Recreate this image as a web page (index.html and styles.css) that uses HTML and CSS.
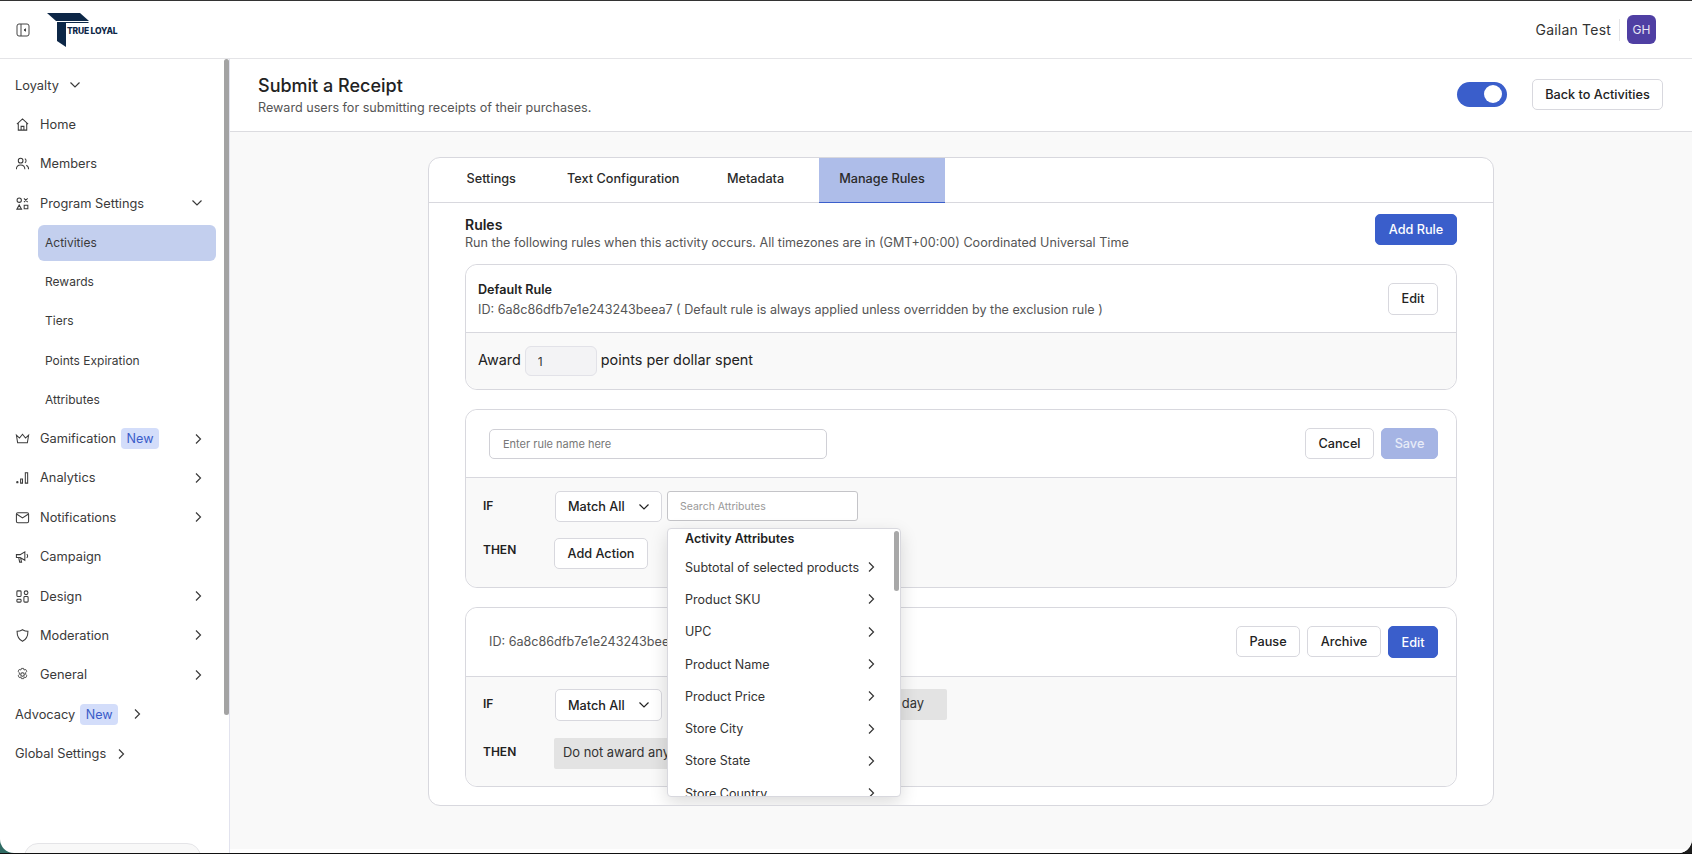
FILE: index.html
```html
<!DOCTYPE html>
<html lang="en">
<head>
    <meta charset="UTF-8">
    <title>Submit a Receipt</title>
    <link rel="stylesheet" href="styles.css">
</head>
<body>
<svg class="defs" width="0" height="0">
    <symbol id="chev-r" viewBox="0 0 10 12"><path d="M3 1.500 7.500 6 3 10.500" fill="none" stroke="currentColor" stroke-width="1.2"/></symbol>
    <symbol id="chev-d" viewBox="0 0 12 10"><path d="M1.500 2.500 6 7l4.500-4.500" fill="none" stroke="currentColor" stroke-width="1.2"/></symbol>
</svg>
<div class="app">
    <header class="topbar">
        <svg class="toggle-icon" viewBox="0 0 14 14" fill="none" stroke="#444" stroke-width="1"><rect x="1" y="1" width="12" height="12" rx="2"/><path d="M5 1v12"/><path d="M9.500 5.800 8 7l1.500 1.200z" fill="#444"/></svg>
        <div class="logo">
            <svg class="logo-mark" viewBox="0 0 44 36"><path d="M0 0h33l9 8H9z" fill="#0d2747"/><path d="M10 9h9v25l-9-6z" fill="#0d2747"/><path d="M19 9h22l1 1H19z" fill="#0d2747"/></svg>
            <span class="logo-text">TRUE LOYAL</span>
        </div>
        <div class="user">
            <span class="user-name">Gailan Test</span>
            <span class="user-div"></span>
            <span class="avatar">GH</span>
        </div>
    </header>
    <div class="body">
        <aside class="sidebar">
            <nav class="nav">
                <div class="row plain"><span>Loyalty</span><svg class="chev-d near"><use href="#chev-d"/></svg></div>
                <div class="row">
                    <svg class="ic" viewBox="0 0 16 16"><path d="M2 7.500 8 2l6 5.500M3.500 6.500V14h9V6.500M6.500 14v-4h3v4"/></svg>
                    <span>Home</span>
                </div>
                <div class="row">
                    <svg class="ic" viewBox="0 0 16 16"><circle cx="6" cy="5" r="2.500"/><path d="M1.500 14c0-3 2-4.500 4.500-4.500s4.500 1.500 4.500 4.500M10.500 2.800a2.500 2.500 0 0 1 0 4.400M12 9.800c1.500.6 2.500 2 2.500 4.200"/></svg>
                    <span>Members</span>
                </div>
                <div class="row">
                    <svg class="ic" viewBox="0 0 16 16"><circle cx="4.500" cy="4.500" r="2.300"/><path d="m9.500 2.500 4 4m0-4-4 4M4.500 9.500l2.500 4.500H2zM9.800 9.800h3.900v3.900H9.800z"/></svg>
                    <span>Program Settings</span>
                    <svg class="chev-d end"><use href="#chev-d"/></svg>
                </div>
                <div class="sub active">Activities</div>
                <div class="sub">Rewards</div>
                <div class="sub">Tiers</div>
                <div class="sub">Points Expiration</div>
                <div class="sub">Attributes</div>
                <div class="row">
                    <svg class="ic" viewBox="0 0 16 16"><path d="M1.500 4.500 4.800 7.500 8 3.500l3.200 4 3.300-3-1.300 8H2.800z"/></svg>
                    <span>Gamification</span><span class="badge">New</span>
                    <svg class="chev-r end"><use href="#chev-r"/></svg>
                </div>
                <div class="row">
                    <svg class="ic" viewBox="0 0 16 16"><circle cx="2.500" cy="13" r=".7"/><path d="M6 9.500h2v4.500H6zM11 3h2.500v11H11z"/></svg>
                    <span>Analytics</span>
                    <svg class="chev-r end"><use href="#chev-r"/></svg>
                </div>
                <div class="row">
                    <svg class="ic" viewBox="0 0 16 16"><rect x="1.500" y="3" width="13" height="10.500" rx="1.500"/><path d="m2 4.500 6 4 6-4"/></svg>
                    <span>Notifications</span>
                    <svg class="chev-r end"><use href="#chev-r"/></svg>
                </div>
                <div class="row">
                    <svg class="ic" viewBox="0 0 16 16"><path d="M1.500 6h4L10.500 3v9l-5-3h-4zM4 9.500 5 14h2l-1-4.500M12.500 5.500a2.500 2.500 0 0 1 0 4"/></svg>
                    <span>Campaign</span>
                </div>
                <div class="row">
                    <svg class="ic" viewBox="0 0 16 16"><rect x="2" y="2" width="4.500" height="6" rx="1"/><circle cx="11.800" cy="4" r="2"/><rect x="2" y="11" width="4.500" height="3" rx="1"/><rect x="9.500" y="8" width="4.500" height="6" rx="1"/></svg>
                    <span>Design</span>
                    <svg class="chev-r end"><use href="#chev-r"/></svg>
                </div>
                <div class="row">
                    <svg class="ic" viewBox="0 0 16 16"><path d="M8 1.800c2 1.200 4 1.700 5.800 1.700 0 5-1 8.500-5.800 10.700C3.200 12 2.200 8.500 2.200 3.500 4 3.500 6 3 8 1.800z"/></svg>
                    <span>Moderation</span>
                    <svg class="chev-r end"><use href="#chev-r"/></svg>
                </div>
                <div class="row">
                    <svg class="ic" viewBox="0 0 16 16"><circle cx="8" cy="8" r="1.900"/><path d="M6.800 1.500h2.400l.4 1.700 1.800-.6 1.200 2.100-1.300 1.200.1 2.100 1.300 1.200-1.200 2.100-1.800-.6-.4 1.700H6.800l-.4-1.700-1.800.6-1.200-2.100 1.300-1.200-.1-2.100-1.300-1.200 1.200-2.100 1.800.6z" stroke-linejoin="round" stroke-width=".9"/></svg>
                    <span>General</span>
                    <svg class="chev-r end"><use href="#chev-r"/></svg>
                </div>
                <div class="row plain"><span>Advocacy</span><span class="badge">New</span><svg class="chev-r near"><use href="#chev-r"/></svg></div>
                <div class="row plain"><span>Global Settings</span><svg class="chev-r near"><use href="#chev-r"/></svg></div>
            </nav>
            <div class="side-pill"></div>
            <div class="side-scroll"></div>
        </aside>
        <main class="main">
            <section class="page-head">
                <div>
                    <h1>Submit a Receipt</h1>
                    <p>Reward users for submitting receipts of their purchases.</p>
                </div>
                <div class="page-actions">
                    <span class="switch"><span class="knob"></span></span>
                    <button class="btn back">Back to Activities</button>
                </div>
            </section>
            <section class="card">
                <div class="tabs">
                    <div class="tab">Settings</div>
                    <div class="tab">Text Configuration</div>
                    <div class="tab">Metadata</div>
                    <div class="tab current">Manage Rules</div>
                </div>
                <div class="card-inner">
                    <div class="rules-head">
                        <div>
                            <h2>Rules</h2>
                            <p>Run the following rules when this activity occurs. All timezones are in (GMT+00:00) Coordinated Universal Time</p>
                        </div>
                        <button class="btn primary add-rule">Add Rule</button>
                    </div>

                    <div class="rule">
                        <div class="rule-top">
                            <div>
                                <div class="rule-name">Default Rule</div>
                                <div class="rule-id">ID: 6a8c86dfb7e1e243243beea7 ( Default rule is always applied unless overridden by the exclusion rule )</div>
                            </div>
                            <div class="rule-btns"><button class="btn edit">Edit</button></div>
                        </div>
                        <div class="rule-award">
                            <span>Award</span>
                            <input class="award-input" value="1" readonly>
                            <span>points per dollar spent</span>
                        </div>
                    </div>

                    <div class="rule">
                        <div class="rule-top">
                            <input class="name-input" placeholder="Enter rule name here">
                            <div class="rule-btns">
                                <button class="btn cancel">Cancel</button>
                                <button class="btn primary save">Save</button>
                            </div>
                        </div>
                        <div class="rule-body">
                            <div class="cond">
                                <span class="cond-label">IF</span>
                                <button class="btn select">Match All<svg class="chev-d"><use href="#chev-d"/></svg></button>
                                <div class="search-wrap">
                                    <input class="search-input" placeholder="Search Attributes">
                                    <div class="dropdown">
                                        <div class="dd-title">Activity Attributes</div>
                                        <div class="dd-item"><span>Subtotal of selected products</span><svg class="chev-r"><use href="#chev-r"/></svg></div>
                                        <div class="dd-item"><span>Product SKU</span><svg class="chev-r"><use href="#chev-r"/></svg></div>
                                        <div class="dd-item"><span>UPC</span><svg class="chev-r"><use href="#chev-r"/></svg></div>
                                        <div class="dd-item"><span>Product Name</span><svg class="chev-r"><use href="#chev-r"/></svg></div>
                                        <div class="dd-item"><span>Product Price</span><svg class="chev-r"><use href="#chev-r"/></svg></div>
                                        <div class="dd-item"><span>Store City</span><svg class="chev-r"><use href="#chev-r"/></svg></div>
                                        <div class="dd-item"><span>Store State</span><svg class="chev-r"><use href="#chev-r"/></svg></div>
                                        <div class="dd-item"><span>Store Country</span><svg class="chev-r"><use href="#chev-r"/></svg></div>
                                        <div class="dd-scroll"></div>
                                    </div>
                                </div>
                            </div>
                            <div class="cond">
                                <span class="cond-label then">THEN</span>
                                <button class="btn action">Add Action</button>
                            </div>
                        </div>
                    </div>

                    <div class="rule last">
                        <div class="rule-top">
                            <div class="rule-id big">ID: 6a8c86dfb7e1e243243beea7</div>
                            <div class="rule-btns">
                                <button class="btn pause">Pause</button>
                                <button class="btn archive">Archive</button>
                                <button class="btn primary edit">Edit</button>
                            </div>
                        </div>
                        <div class="rule-body tight">
                            <div class="cond">
                                <span class="cond-label">IF</span>
                                <button class="btn select tall">Match All<svg class="chev-d"><use href="#chev-d"/></svg></button>
                                <div class="chip wide">day</div>
                            </div>
                            <div class="cond">
                                <span class="cond-label then">THEN</span>
                                <div class="chip long">Do not award any</div>
                            </div>
                        </div>
                    </div>
                </div>
            </section>
        </main>
    </div>
</div>
</body>
</html>
```

FILE: styles.css
```css
* {
    box-sizing: border-box;
}
html, body {
    margin: 0;
    height: 854px;
    overflow: hidden;
}
body {
    background: linear-gradient(90deg, #2f6b63 0%, #1d1d1d 100%);
    border-top: 1px solid #333;
    border-bottom: 1px solid #111;
    font-family: Inter, "Liberation Sans", sans-serif;
    color: #222;
}
.defs {
    position: absolute;
}
.app {
    height: 852px;
    background: #fff;
    border-radius: 0 0 14px 14px;
    overflow: hidden;
    display: flex;
    flex-direction: column;
}

/* top bar */
.topbar {
    height: 58px;
    flex: none;
    display: flex;
    align-items: center;
    border-bottom: 1px solid #e4e4e7;
    padding: 0 36px 0 16px;
}
.toggle-icon {
    width: 14px;
    height: 14px;
}
.logo {
    margin-left: 17px;
    position: relative;
    width: 72px;
    height: 36px;
    margin-top: 3px;
}
.logo-mark {
    width: 44px;
    height: 36px;
    display: block;
}
.logo-text {
    position: absolute;
    left: 20px;
    top: 13px;
    font-size: 8.5px;
    font-weight: 800;
    color: #0d2747;
    white-space: nowrap;
    letter-spacing: -0.2px;
}
.user {
    margin-left: auto;
    display: flex;
    align-items: center;
}
.user-name {
    font-size: 14px;
    letter-spacing: 0.2px;
    color: #333;
}
.user-div {
    width: 1px;
    height: 22px;
    background: #e4e4e7;
    margin: 0 7px 0 8px;
}
.avatar {
    width: 29px;
    height: 29px;
    border-radius: 6px;
    background: #4f3fa3;
    color: #e9e7f5;
    font-size: 12px;
    display: flex;
    align-items: center;
    justify-content: center;
}

.body {
    flex: 1;
    display: flex;
    min-height: 0;
}

/* sidebar */
.sidebar {
    width: 230px;
    flex: none;
    position: relative;
    border-right: 1px solid #e2e3ee;
    display: flex;
    flex-direction: column;
    overflow: hidden;
}
.nav {
    padding: 6.5px 0 0 15px;
}
.row {
    height: 39.4px;
    display: flex;
    align-items: center;
    font-size: 12.8px;
    color: #3a3a3a;
    padding-right: 26px;
}
.row .ic {
    width: 15px;
    height: 15px;
    margin-right: 10px;
    fill: none;
    stroke: #3a3a3a;
    stroke-width: 1.1;
    flex: none;
}
.chev-r {
    width: 10px;
    height: 12px;
    flex: none;
}
.chev-d {
    width: 12px;
    height: 10px;
    flex: none;
}
.end {
    margin-left: auto;
}
.near {
    margin-left: 10px;
}
.badge {
    background: #d3ddfa;
    color: #3a5cc9;
    font-size: 12.6px;
    line-height: 21px;
    border-radius: 4px;
    padding: 0 5.5px;
    margin-left: 5px;
}
.badge + .near {
    margin-left: 14px;
}
.sub {
    margin-left: 23px;
    width: 178px;
    height: 39.2px;
    display: flex;
    align-items: center;
    padding-left: 7px;
    font-size: 12px;
    color: #3a3a3a;
}
.sub.active {
    height: 36px;
    margin: 1.5px 0 1.5px 23px;
    background: #c3cfee;
    border-radius: 6px;
}
.side-pill {
    margin: auto 0 -20px 24px;
    width: 177px;
    height: 30px;
    flex: none;
    background: #f8f8f8;
    border: 1px solid #e4e4e7;
    border-radius: 14px;
}
.side-scroll {
    position: absolute;
    right: 0;
    top: 0;
    width: 5px;
    height: 656px;
    background: #a3a3a3;
    border-radius: 3px;
}

/* main */
.main {
    flex: 1;
    min-width: 0;
    background: #f9f9f9;
    padding-bottom: 4px;
    display: flex;
    flex-direction: column;
    align-items: center;
    border-bottom: 4px solid #fff;
}
.page-head {
    width: 100%;
    height: 73px;
    flex: none;
    background: #fff;
    border-bottom: 1px solid #dcdce0;
    display: flex;
    align-items: center;
    justify-content: space-between;
    padding: 0 29px 0 28px;
}
.page-head h1 {
    margin: 0;
    font-size: 18px;
    font-weight: 500;
    line-height: 24px;
    color: #222;
}
.page-head p {
    margin: 1px 0 0;
    font-size: 12.6px;
    line-height: 18px;
    color: #555;
}
.page-actions {
    display: flex;
    align-items: center;
    gap: 25px;
    margin-bottom: 2px;
}
.switch {
    width: 50px;
    height: 25px;
    background: #3a5ecb;
    border-radius: 13px;
    display: flex;
    align-items: center;
    justify-content: flex-end;
    padding-right: 5px;
}
.knob {
    width: 18px;
    height: 18px;
    border-radius: 50%;
    background: #fff;
}
.btn {
    font-family: inherit;
    font-size: 12.7px;
    font-weight: 500;
    height: 31px;
    border: 1px solid #d8d8de;
    border-radius: 5px;
    background: #fff;
    color: #222;
    padding: 0;
}
.btn.primary {
    background: #3a5ecb;
    border-color: #3a5ecb;
    color: #fff;
}
.back {
    width: 131px;
}
.add-rule {
    width: 82px;
}
.edit {
    width: 50px;
    height: 32px;
}
.cancel {
    width: 69px;
}
.btn.save {
    width: 57px;
    background: #a5b4e4;
    border-color: #a5b4e4;
    color: #e8ecf8;
}
.pause {
    width: 64px;
}
.archive {
    width: 74px;
}

/* card */
.card {
    width: 1066px;
    margin-top: 25px;
    background: #fff;
    border: 1px solid #d8d8de;
    border-radius: 12px;
    overflow: hidden;
}
.tabs {
    height: 45px;
    display: flex;
    border-bottom: 1px solid #d8d8de;
    padding-left: 17px;
}
.tab {
    padding: 0 20.5px 4px;
    display: flex;
    align-items: center;
    font-size: 12.7px;
    font-weight: 500;
    color: #2a2a2a;
}
.tab:nth-child(1) {
    margin-right: 10px;
}
.tab:nth-child(2) {
    margin-right: 6.5px;
}
.tab:nth-child(3) {
    margin-right: 14px;
}
.tab.current {
    background: #aebde9;
    border-bottom: 1px solid #3a5ecb;
    height: 45px;
}
.card-inner {
    padding: 11px 36px 18px;
}
.rules-head {
    display: flex;
    justify-content: space-between;
    align-items: flex-start;
    margin-bottom: 12px;
    height: 38px;
}
.rules-head h2 {
    margin: 2px 0 0;
    font-size: 14px;
    line-height: 18px;
    font-weight: 600;
}
.rules-head p {
    margin: 0;
    font-size: 12.6px;
    line-height: 18px;
    color: #555;
}
.rule {
    border: 1px solid #d8d8de;
    border-radius: 12px;
    margin-bottom: 19px;
}
.rule.last {
    margin-bottom: 0;
}
.rule-top {
    height: 68px;
    display: flex;
    align-items: center;
    justify-content: space-between;
    padding: 0 18px 0 12px;
    border-bottom: 1px solid #d8d8de;
    border-radius: 12px 12px 0 0;
    background: #fff;
}
.rule.last .rule-top {
    height: 69px;
}
.rule-name {
    font-size: 12.6px;
    font-weight: 600;
    line-height: 20px;
    margin-top: 1px;
}
.rule-id {
    font-size: 12.6px;
    line-height: 19px;
    color: #555;
}
.rule-id.big {
    margin-left: 11px;
    margin-bottom: 1px;
}
.rule-btns {
    display: flex;
    gap: 7px;
}
.rule-award {
    height: 56px;
    background: #f9f9f9;
    border-radius: 0 0 12px 12px;
    display: flex;
    align-items: center;
    gap: 4px;
    padding-left: 12px;
    font-size: 14.4px;
    color: #222;
}
.rule-award span {
    margin-bottom: 3px;
}
.award-input {
    width: 72px;
    height: 30px;
    background: #f3f3f5;
    border: 1px solid #e2e2e8;
    border-radius: 6px;
    padding-left: 12px;
    font-family: inherit;
    font-size: 12px;
    color: #333;
}
.name-input {
    width: 338px;
    height: 30px;
    margin-left: 11px;
    border: 1px solid #d0d0d6;
    border-radius: 5px;
    padding-left: 13px;
    font-family: inherit;
    font-size: 11px;
}
.name-input::placeholder {
    color: #777;
}
.search-input::placeholder {
    color: #999;
}
.rule-body {
    background: #f9f9f9;
    border-radius: 0 0 12px 12px;
    height: 109px;
    padding: 13px 17px 0;
    display: flex;
    flex-direction: column;
    gap: 16px;
}
.rule-body.tight {
    padding-top: 12px;
    gap: 18px;
}
.cond {
    display: flex;
    gap: 5px;
    height: 31px;
}
.cond-label {
    width: 67px;
    flex: none;
    font-size: 12px;
    font-weight: 600;
    line-height: 29px;
    color: #222;
}
.cond-label.then {
    width: 66px;
    line-height: 24px;
}
.tight .cond-label.then {
    line-height: 27px;
}
.cond .select {
    width: 107px;
    display: flex;
    align-items: center;
    justify-content: space-between;
    padding: 0 11px 0 12px;
}
.select.tall {
    height: 32px;
}
.action {
    width: 94px;
}
.search-wrap {
    position: relative;
}
.search-input {
    width: 191px;
    height: 30px;
    border: 1px solid #c4c4c8;
    border-radius: 3px;
    padding-left: 12px;
    font-family: inherit;
    font-size: 10.5px;
}
.chip {
    background: #e3e3e3;
    height: 31px;
    display: flex;
    align-items: center;
    padding: 0 9px 3px;
    font-size: 12.9px;
    color: #333;
    border-radius: 2px;
}
.chip.wide {
    width: 280px;
    justify-content: flex-end;
    padding-right: 23px;
}
.chip.long {
    width: 160px;
}

/* attribute list opened under the search box */
.dropdown {
    position: absolute;
    left: 0;
    top: 37px;
    width: 234px;
    height: 269px;
    background: #fff;
    border: 1px solid #d8d8de;
    border-radius: 4px;
    box-shadow: 0 6px 18px rgba(0, 0, 0, 0.14);
    overflow: hidden;
    z-index: 5;
    padding-left: 17px;
}
.dd-title {
    font-size: 12.5px;
    font-weight: 600;
    line-height: 20px;
    height: 22px;
}
.dd-item {
    height: 32.3px;
    display: flex;
    align-items: center;
    justify-content: space-between;
    padding-right: 24px;
    font-size: 12.5px;
    color: #333;
}
.dd-scroll {
    position: absolute;
    right: 1px;
    top: 2px;
    width: 5px;
    height: 60px;
    background: #a8a8a8;
    border-radius: 3px;
}
```
